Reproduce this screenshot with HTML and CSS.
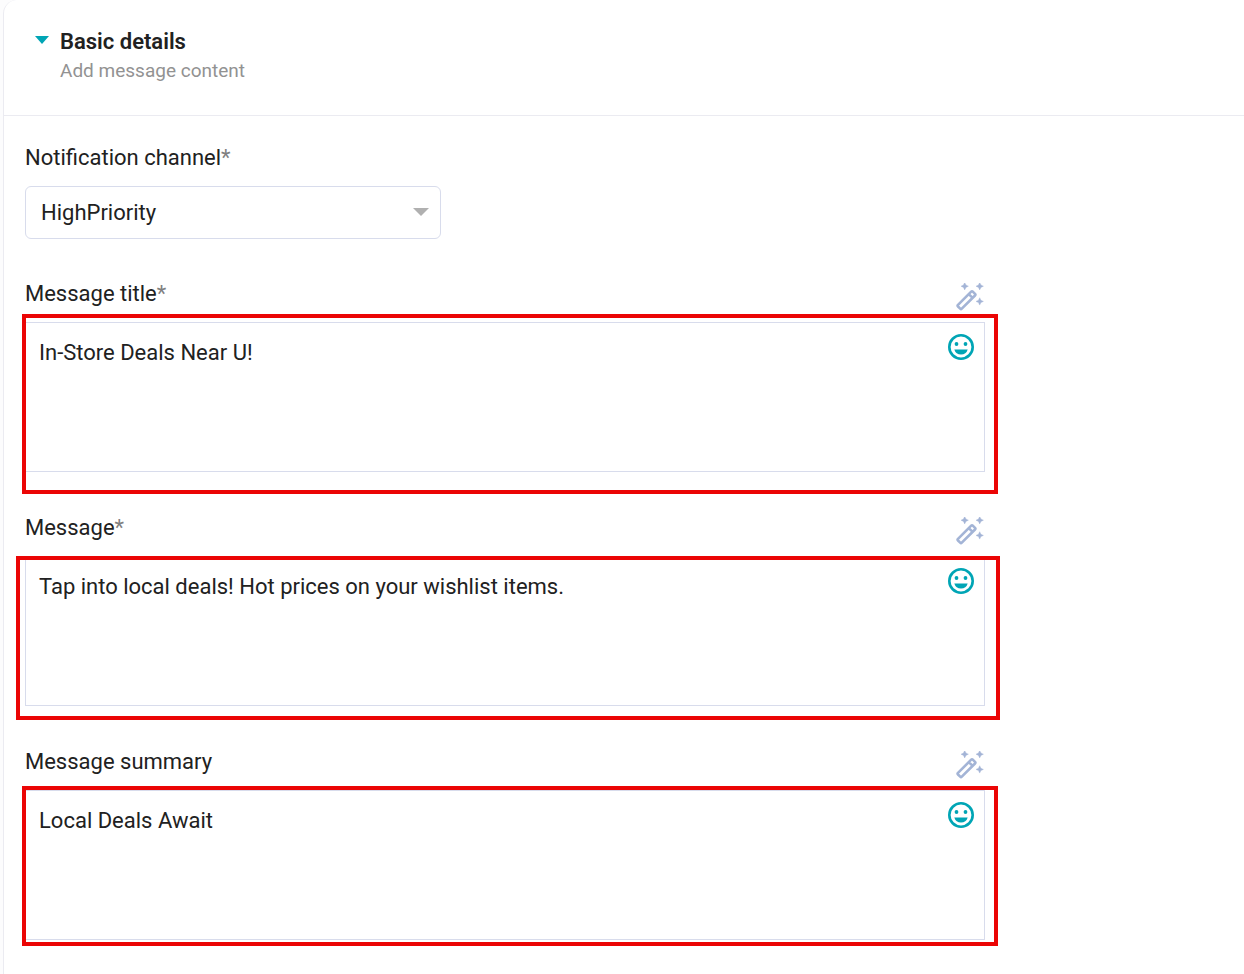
FILE: index.html
```html
<!DOCTYPE html>
<html lang="en">
<head>
<meta charset="utf-8">
<meta name="viewport" content="width=device-width, initial-scale=1">
<title>Basic details</title>
<link rel="stylesheet" href="styles.css">
</head>
<body>
<svg class="sprite" aria-hidden="true">
  <symbol id="wand" viewBox="0 0 28 28">
    <path d="M8.700-.5 9.900 2 12.400 3.200 9.900 4.400 8.700 6.900 7.500 4.400 5 3.200 7.500 2ZM23.700-.5l1.200 2.500 2.500 1.200-2.500 1.200-1.200 2.500-1.200-2.500L20 3.200 22.500 2ZM23.700 14.700l1.200 2.500 2.500 1.200-2.500 1.200-1.200 2.500-1.200-2.500L20 18.400l2.500-1.200Z" fill="currentColor" stroke="currentColor" stroke-width=".4"/>
    <path d="M2 21.900 15.200 8.700Q16 7.900 16.800 8.700L19 10.900Q19.800 11.700 19 12.500L5.800 25.700Q5 26.500 4.200 25.700L2 23.500Q1.200 22.700 2 21.900ZM12.800 11.100l3.800 3.800" fill="none" stroke="currentColor" stroke-width="2.600"/>
  </symbol>
  <symbol id="smile" viewBox="0 0 26 26">
    <circle cx="13" cy="13" r="11.700" fill="none" stroke="currentColor" stroke-width="2.600"/>
    <circle cx="8.500" cy="10" r="1.900" fill="currentColor"/>
    <circle cx="17.500" cy="10" r="1.900" fill="currentColor"/>
    <path d="M6.300 15.500h13.400a7 7 0 0 1-13.400 0Z" fill="currentColor"/>
  </symbol>
</svg>
<main class="card">
  <header class="card-header">
    <button class="toggle" type="button" aria-expanded="true" aria-label="Collapse basic details">
      <svg class="toggle-caret" viewBox="0 0 14 8" aria-hidden="true"><path d="M0 0h14L7 8Z" fill="currentColor"/></svg>
    </button>
    <div>
      <h1 class="title">Basic details</h1>
      <p class="subtitle">Add message content</p>
    </div>
  </header>
  <form class="form">
    <div class="channel">
      <label class="label" for="channel">Notification channel<span class="required">*</span></label>
      <div class="select-wrap">
        <select class="select" id="channel"><option>HighPriority</option></select>
        <svg class="select-caret" viewBox="0 0 16 8" aria-hidden="true"><path d="M0 0h16L8 8Z" fill="currentColor"/></svg>
      </div>
    </div>
    <div class="field">
      <div class="field-head">
        <label class="label" for="message-title">Message title<span class="required">*</span></label>
        <button class="icon-button wand" type="button" aria-label="Personalize message title"><svg class="icon"><use href="#wand"/></svg></button>
      </div>
      <div class="input-wrap">
        <textarea class="textarea" id="message-title">In-Store Deals Near U!</textarea>
        <button class="icon-button smile" type="button" aria-label="Insert emoji in title"><svg class="icon"><use href="#smile"/></svg></button>
        <span class="highlight highlight-title"></span>
      </div>
    </div>
    <div class="field">
      <div class="field-head">
        <label class="label" for="message">Message<span class="required">*</span></label>
        <button class="icon-button wand" type="button" aria-label="Personalize message"><svg class="icon"><use href="#wand"/></svg></button>
      </div>
      <div class="input-wrap">
        <textarea class="textarea" id="message">Tap into local deals! Hot prices on your wishlist items.</textarea>
        <button class="icon-button smile" type="button" aria-label="Insert emoji in message"><svg class="icon"><use href="#smile"/></svg></button>
        <span class="highlight highlight-message"></span>
      </div>
    </div>
    <div class="field">
      <div class="field-head">
        <label class="label" for="summary">Message summary</label>
        <button class="icon-button wand" type="button" aria-label="Personalize summary"><svg class="icon"><use href="#wand"/></svg></button>
      </div>
      <div class="input-wrap">
        <textarea class="textarea" id="summary">Local Deals Await</textarea>
        <button class="icon-button smile" type="button" aria-label="Insert emoji in summary"><svg class="icon"><use href="#smile"/></svg></button>
        <span class="highlight highlight-summary"></span>
      </div>
    </div>
  </form>
</main>
</body>
</html>
```
FILE: styles.css
```css
* {
  box-sizing: border-box;
}

body {
  margin: 0;
  padding-left: 3px;
  background: #fcfcfd;
  color: #212121;
  font-family: Roboto, "Liberation Sans", sans-serif;
  font-size: 22px;
  line-height: 28px;
}

button,
select,
textarea {
  font: inherit;
  color: inherit;
}

.sprite {
  position: absolute;
  width: 0;
  height: 0;
}

.card {
  min-height: 100vh;
  background: #fff;
  border-left: 1px solid #ebebf1;
  border-radius: 14px 0 0 0;
}

.card-header {
  display: flex;
  gap: 11px;
  padding: 28px 31px 30px;
  border-bottom: 1px solid #ebebf1;
}

.toggle {
  display: flex;
  align-items: center;
  height: 24px;
  padding: 0;
  border: 0;
  background: none;
  color: #00a5b5;
}

.toggle-caret {
  width: 14px;
  height: 8px;
}

.title,
.subtitle {
  margin: 0;
}

.title {
  font-size: 22px;
  font-weight: 600;
}

.subtitle {
  margin-top: 1px;
  color: #929292;
  font-size: 19px;
}

.form {
  max-width: 1002px;
  padding: 28px 21px;
}

.channel {
  display: grid;
  gap: 14px;
  margin-bottom: 41px;
}

.required {
  color: #808080;
}

.select-wrap,
.input-wrap {
  position: relative;
}

.select-wrap {
  max-width: 416px;
}

.select {
  display: block;
  width: 100%;
  height: 53px;
  padding: 1px 40px 0 15px;
  border: 1px solid #d8dcec;
  border-radius: 6px;
  background: #fff;
  appearance: none;
}

.select-caret {
  position: absolute;
  top: 22px;
  right: 12px;
  width: 16px;
  height: 8px;
  color: #b0b0b0;
  pointer-events: none;
}

.field {
  margin-bottom: 42px;
}

.field-head {
  display: flex;
  justify-content: space-between;
  align-items: flex-start;
  height: 42px;
}

.icon-button {
  display: block;
  padding: 0;
  border: 0;
  background: none;
}

.icon {
  display: block;
  width: 100%;
  height: 100%;
}

.wand {
  width: 28px;
  height: 28px;
  margin: 3px 1px 0 0;
  color: #a3b4d6;
}

.smile {
  position: absolute;
  top: 12px;
  right: 11px;
  width: 26px;
  height: 26px;
  color: #00a5b5;
}

.textarea {
  display: block;
  width: 100%;
  height: 150px;
  padding: 16px 48px 15px 13px;
  border: 1px solid #d8dcec;
  background: #fff;
  resize: none;
  outline: 0;
}

.highlight {
  position: absolute;
  border: 4px solid #eb0505;
  pointer-events: none;
}

.highlight-title {
  inset: -8px -13px -22px -3px;
}

.highlight-message {
  inset: 0 -15px -14px -9px;
}

.highlight-summary {
  inset: -4px -13px -6px -3px;
}
```
